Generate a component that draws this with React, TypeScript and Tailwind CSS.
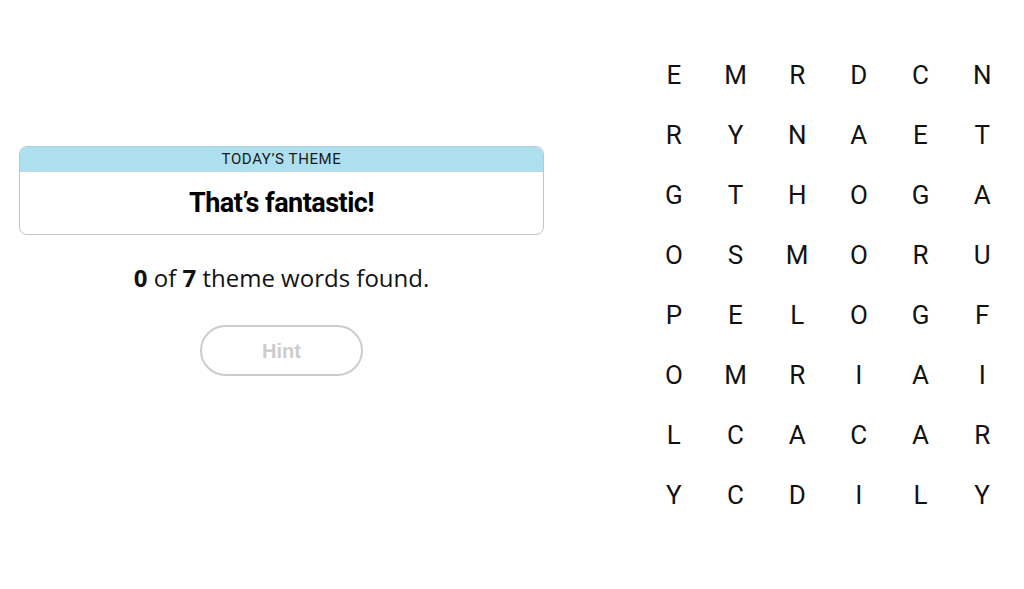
const rows = [
  "EMRDCN",
  "RYNAET",
  "GTHOGA",
  "OSMORU",
  "PELOGF",
  "OMRIAI",
  "LCACAR",
  "YCDILY",
];

function ThemeCard() {
  return (
    <div className="overflow-hidden rounded-[8px] border border-[#c4c4c4]">
      <div className="flex h-[25px] items-center justify-center bg-[#aedfee] text-[15px] tracking-[0.04em] text-[#1a1a1a] [font-family:'Roboto',sans-serif]">
        TODAY’S THEME
      </div>
      <div className="flex h-[62px] items-center justify-center text-[27px] font-bold tracking-[-0.02em] text-black [font-family:'Roboto',sans-serif]">
        That’s fantastic!
      </div>
    </div>
  );
}

export default function App() {
  return (
    <div className="flex h-[589px] w-[1024px] bg-white text-black">
      <section className="flex w-[563px] flex-col px-[19px] pt-[146px]">
        <ThemeCard />
        <p className="mt-[25px] text-center text-[24px] text-[#121212] [font-family:'Open_Sans',sans-serif]">
          <b>0</b> of <b>7</b> theme words found.
        </p>
        <div className="mt-[29px] flex justify-center">
          <button
            type="button"
            disabled
            className="h-[51px] w-[163px] rounded-full border-2 border-[#cccccc] text-[20px] font-bold text-[#cccccc] [font-family:'Liberation_Sans',Arial,sans-serif]"
          >
            Hint
          </button>
        </div>
      </section>

      <section className="ml-[80px] pt-[45px]">
        <div className="grid w-[370px] grid-cols-6">
          {rows.map((row, r) =>
            row.split("").map((ch, c) => (
              <div
                key={`${r}-${c}`}
                className="flex h-[60px] items-center justify-center text-[26px] text-[#121212] [font-family:'Roboto',sans-serif]"
              >
                {ch}
              </div>
            ))
          )}
        </div>
      </section>
    </div>
  );
}
